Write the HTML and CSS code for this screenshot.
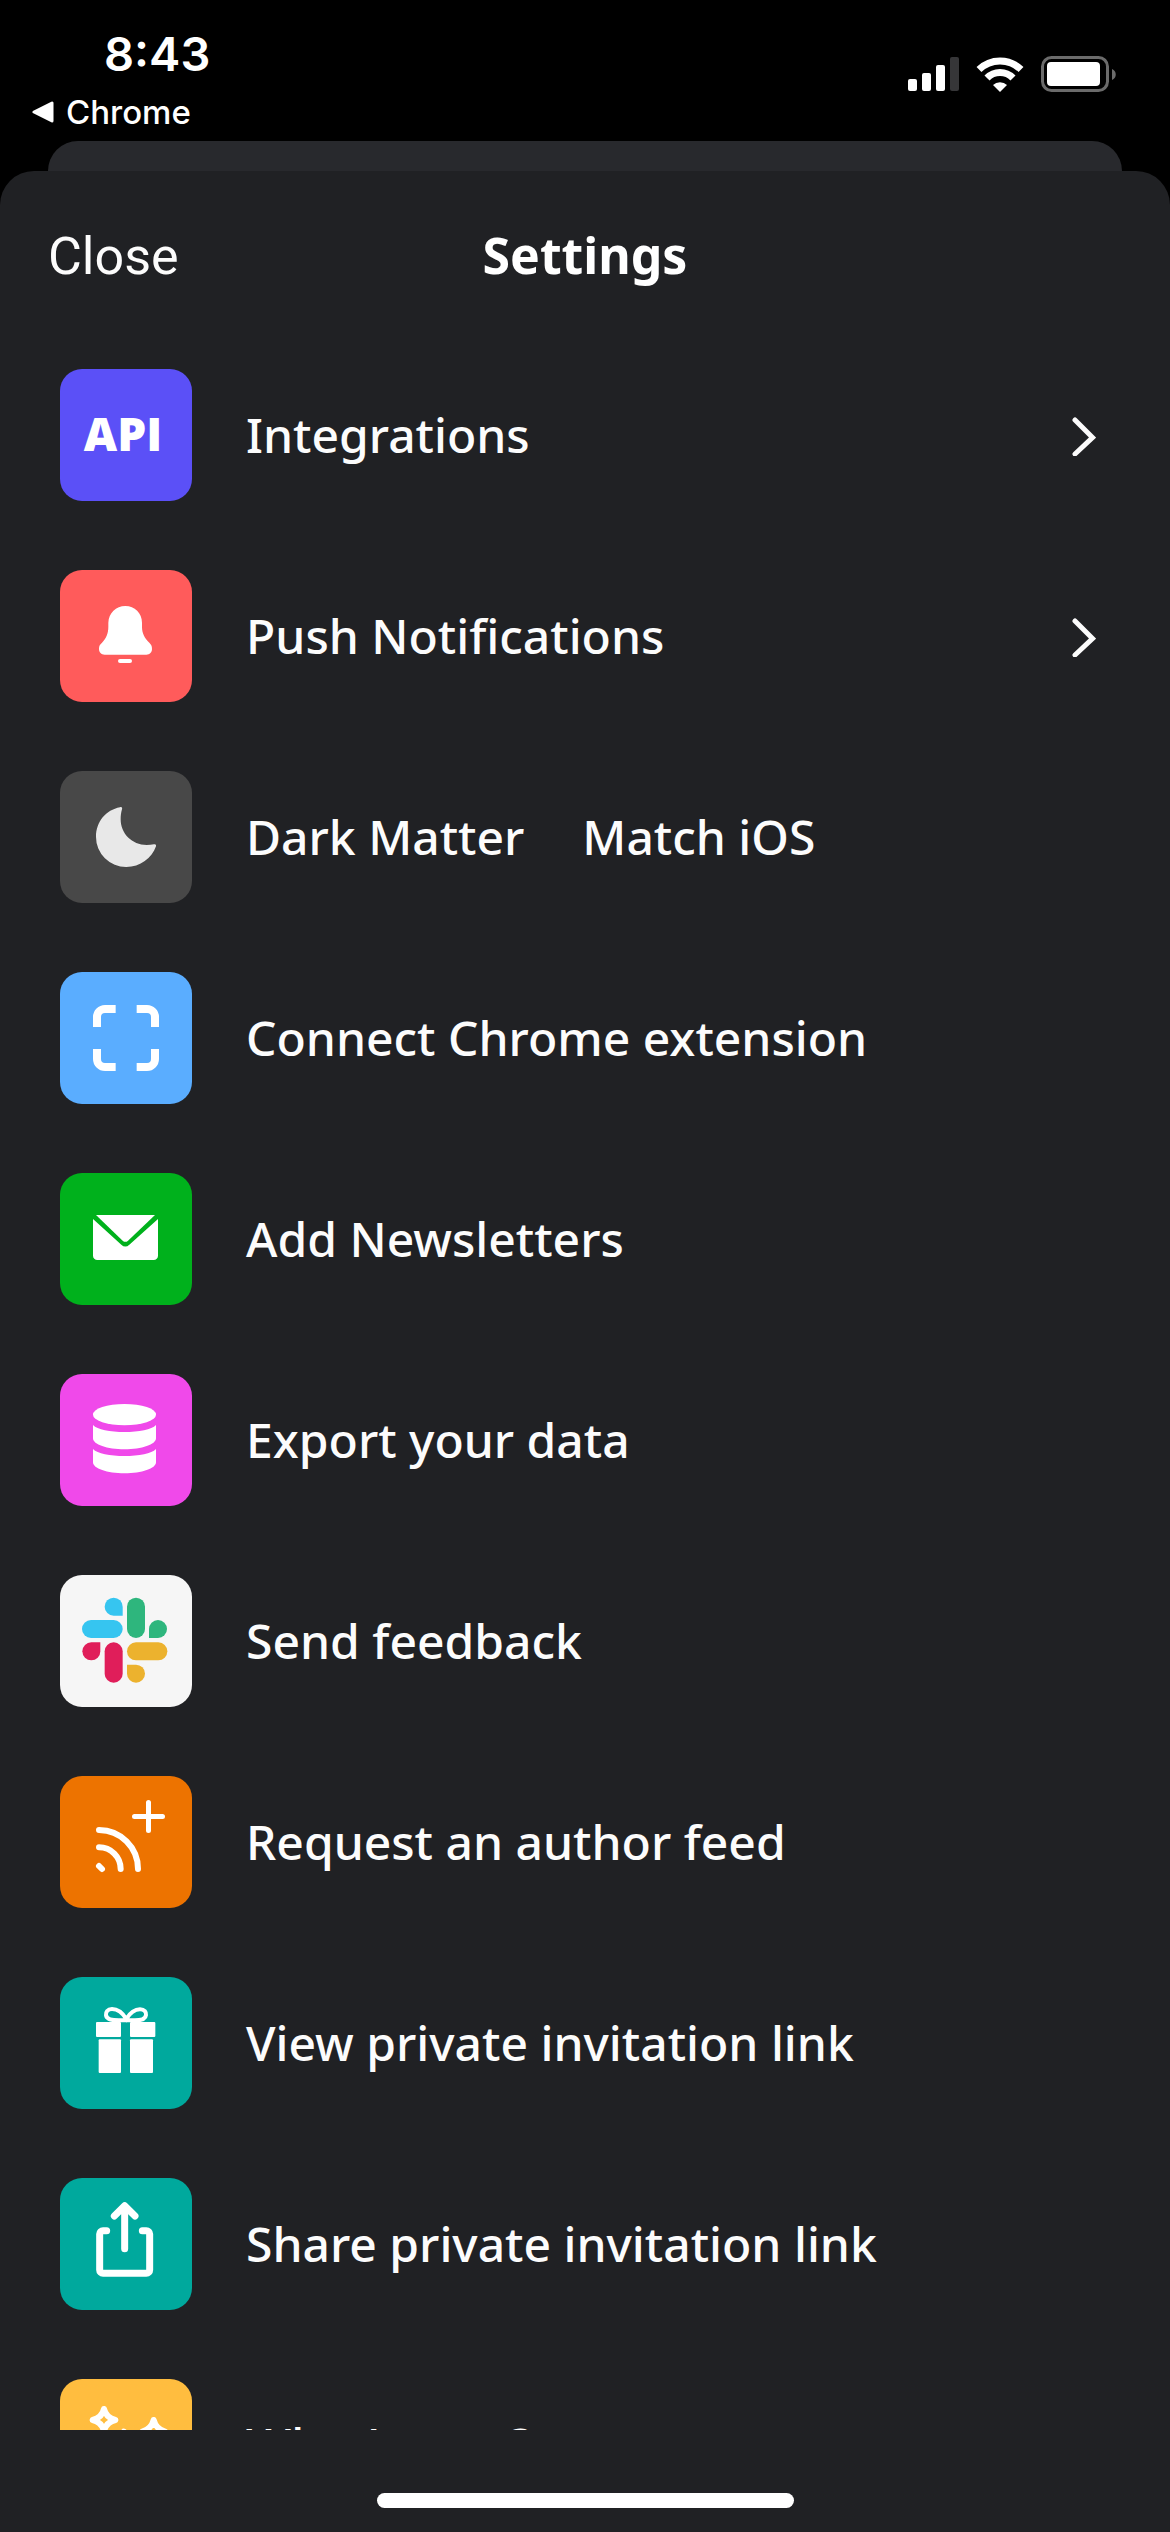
FILE: index.html
```html
<!DOCTYPE html>
<html lang="en">
<head>
<meta charset="utf-8">
<meta name="viewport" content="width=device-width, initial-scale=1">
<title>Settings</title>
<link rel="stylesheet" href="styles.css">
</head>
<body>
<header class="status">
  <div class="status-left">
    <time class="clock">8:43</time>
    <a class="back" href="#">
      <svg class="back-arrow" viewBox="0 0 22 22" aria-hidden="true"><path d="M20 2v18L2 11z" fill="#fff" stroke="#fff" stroke-width="3" stroke-linejoin="round"/></svg>
      Chrome
    </a>
  </div>
  <div class="status-right">
    <svg class="signal" viewBox="0 0 51 36" aria-hidden="true"><g fill="#fff"><rect x="0" y="23" width="9" height="12" rx="2"/><rect x="14" y="17" width="9" height="18" rx="2"/><rect x="28" y="9" width="9" height="26" rx="2"/><rect x="42" y="1" width="9" height="34" rx="2" fill="#363638"/></g></svg>
    <svg class="wifi" viewBox="0 0 48 36" aria-hidden="true"><g fill="none" stroke="#fff" stroke-width="7"><path d="M3 13.500A30 30 0 0 1 45 13.500"/><path d="M11 22a18 18 0 0 1 26 0"/></g><path d="M17 29a10 10 0 0 1 14 0l-7 7z" fill="#fff"/></svg>
    <svg class="battery" viewBox="0 0 76 36" aria-hidden="true"><rect x="1.500" y="1.500" width="65" height="33" rx="9" fill="none" stroke="#6b6b6b" stroke-width="3"/><rect x="6" y="6" width="53" height="24" rx="4" fill="#fff"/><path d="M71 13c5 2 5 9 0 11z" fill="#6b6b6b"/></svg>
  </div>
</header>
<div class="card-behind"></div>
<main class="sheet">
  <div class="sheet-head">
    <button class="close" type="button">Close</button>
    <h1 class="title">Settings</h1>
  </div>
  <ul class="list">
    <li><button class="row" type="button">
      <span class="tile tile-api">API</span>
      <span class="label">Integrations</span>
      <svg class="chevron" viewBox="0 0 24 42" aria-hidden="true"><path d="M3 6l17.500 17.500L3 40"/></svg>
    </button></li>
    <li><button class="row" type="button">
      <svg class="tile tile-bell" viewBox="0 0 396 396" aria-hidden="true"><g fill="#fff"><path d="M196 108C224 108 246 130 246 158V170C246 190 254 204 268 218C274 224 276 228 276 237C276 247 269 254 259 254H134C124 254 117 247 117 237C117 228 119 224 126 218C139 204 145 190 145 170V158C146 130 168 108 196 108z"/><rect x="174" y="267" width="42" height="12" rx="6"/></g></svg>
      <span class="label">Push Notifications</span>
      <svg class="chevron" viewBox="0 0 24 42" aria-hidden="true"><path d="M3 6l17.500 17.500L3 40"/></svg>
    </button></li>
    <li><button class="row" type="button">
      <svg class="tile tile-moon" viewBox="0 0 396 396" aria-hidden="true"><path fill="#e8e8e8" d="M180 109C184 107 188 110 186 115C183 125 182 135 182 145C182 188 216 222 260 222C268 222 275 221 282 220C287 219 289 222 288 226C276 262 240 288 199 288A90 90 0 0 1 108 198C108 152 138 117 180 109z"/></svg>
      <span class="label">Dark Matter</span>
      <span class="value">Match iOS</span>
    </button></li>
    <li><button class="row" type="button">
      <svg class="tile tile-scan" viewBox="0 0 396 396" aria-hidden="true"><path fill="none" stroke="#fff" stroke-width="24" d="M111 165V135a24 24 0 0 1 24-24h32M230 111h31a24 24 0 0 1 24 24v30M285 231v30a24 24 0 0 1-24 24h-31M167 285h-32a24 24 0 0 1-24-24v-30"/></svg>
      <span class="label">Connect Chrome extension</span>
    </button></li>
    <li><button class="row" type="button">
      <svg class="tile tile-mail" viewBox="0 0 396 396" aria-hidden="true"><g fill="#fff"><path d="M108 126H285L204 203Q196 210 188 203z"/><path d="M99 138L184 215Q196 226 208 215L294 138V248a13 13 0 0 1-13 13H112a13 13 0 0 1-13-13z"/></g></svg>
      <span class="label">Add Newsletters</span>
    </button></li>
    <li><button class="row" type="button">
      <svg class="tile tile-data" viewBox="0 0 396 396" aria-hidden="true"><g fill="#fff"><ellipse cx="193.500" cy="122" rx="94.500" ry="32"/><path d="M99 153C112 167 150 174 193.500 174S275 167 288 153V193C288 212 245 226 193.500 226S99 212 99 193z"/><path d="M99 225C112 239 150 246 193.500 246S275 239 288 225V265C288 284 245 298 193.500 298S99 284 99 265z"/></g></svg>
      <span class="label">Export your data</span>
    </button></li>
    <li><button class="row" type="button">
      <svg class="tile tile-slack" viewBox="0 0 396 396" aria-hidden="true"><g fill="#36c5f0"><path d="M161 68a27 27 0 0 1 27 27v27h-27a27 27 0 0 1 0-54z"/><rect x="66" y="135" width="122" height="54" rx="27"/></g><g fill="#2eb67d"><rect x="201" y="68" width="54" height="121" rx="27"/><path d="M267 189v-27a27 27 0 1 1 27 27z"/></g><g fill="#ecb22e"><rect x="201" y="202" width="121" height="54" rx="27"/><path d="M201 269h27a27 27 0 1 1-27 27z"/></g><g fill="#e01e5a"><rect x="134" y="202" width="54" height="121" rx="27"/><path d="M121 202v27a27 27 0 1 1-27-27z"/></g></svg>
      <span class="label">Send feedback</span>
    </button></li>
    <li><button class="row" type="button">
      <svg class="tile tile-feed" viewBox="0 0 396 396" aria-hidden="true"><g fill="none" stroke="#fff" stroke-linecap="round"><path stroke-width="15" d="M265.500 79.500v84M223.500 121.500h84"/><path stroke-width="18" d="M117 162a117 117 0 0 1 117 117M117 214a65 65 0 0 1 65 65M117 270l9 9"/></g></svg>
      <span class="label">Request an author feed</span>
    </button></li>
    <li><button class="row" type="button">
      <svg class="tile tile-gift" viewBox="0 0 396 396" aria-hidden="true"><g fill="#fff"><rect x="108" y="135" width="75" height="45" rx="3"/><rect x="210" y="135" width="76" height="45" rx="3"/><rect x="116" y="187" width="67" height="101" rx="3"/><rect x="210" y="187" width="69" height="101" rx="3"/></g><path fill="none" stroke="#fff" stroke-width="12" d="M199 126C188 108 172 96 156 96C142 96 137 106 138 114C139 126 155 130 176 130H225C242 130 257 126 258 114C259 106 254 97 240 97C224 97 210 108 199 126z"/></svg>
      <span class="label">View private invitation link</span>
    </button></li>
    <li><button class="row" type="button">
      <svg class="tile tile-gift" viewBox="0 0 396 396" aria-hidden="true"><path fill="none" stroke="#fff" stroke-width="21" stroke-linecap="round" stroke-linejoin="round" d="M140 158H129a10 10 0 0 0-10 10V276a10 10 0 0 0 10 10H259a10 10 0 0 0 10-10V168a10 10 0 0 0-10-10H247M194 84V212M163 114L194 83L225 114"/></svg>
      <span class="label">Share private invitation link</span>
    </button></li>
    <li><button class="row" type="button">
      <svg class="tile tile-new" viewBox="0 0 396 396" aria-hidden="true"><g fill="none" stroke="#fff" stroke-width="18" stroke-linejoin="round"><path d="M132 90Q138 116 166 123Q138 130 132 157Q126 130 98 123Q126 116 132 90z"/><path d="M281 123Q288 150 315 158Q288 166 281 193Q274 166 247 158Q274 150 281 123z"/><path d="M192 158Q204 215 252 230Q204 245 192 302Q180 245 132 230Q180 215 192 158z"/></g></svg>
      <span class="label">What's new?</span>
    </button></li>
  </ul>
  <footer class="home"><div class="home-bar"></div></footer>
</main>
</body>
</html>
```

FILE: styles.css
```css
* {
  box-sizing: border-box;
}

body {
  margin: 0;
  height: 100vh;
  display: flex;
  flex-direction: column;
  background: #000;
  color: #fcfcfc;
  font-family: "Noto Sans", sans-serif;
}

.status {
  flex: none;
  height: 141px;
  display: flex;
  justify-content: space-between;
  padding: 24px 53px 0 32px;
  color: #fff;
  font-family: Inter, sans-serif;
}

.status-left {
  display: flex;
  flex-direction: column;
  align-items: flex-start;
  gap: 8px;
}

.clock {
  padding-left: 72px;
  font-size: 47px;
  font-weight: 600;
  line-height: 60px;
}

.back {
  display: flex;
  align-items: center;
  gap: 12px;
  color: inherit;
  font-size: 33px;
  font-weight: 500;
  line-height: 40px;
  text-decoration: none;
}

.back-arrow {
  width: 22px;
  height: 22px;
}

.status-right {
  display: flex;
  gap: 17px;
  padding-top: 32px;
}

.signal {
  width: 51px;
  height: 36px;
}

.wifi {
  width: 48px;
  height: 36px;
}

.battery {
  width: 76px;
  height: 36px;
}

.card-behind {
  flex: none;
  height: 30px;
  margin: 0 48px;
  border-radius: 30px 30px 0 0;
  background: #28292d;
}

.sheet {
  flex: 1;
  min-height: 0;
  display: flex;
  flex-direction: column;
  border-radius: 34px 34px 0 0;
  background: #202124;
}

.sheet-head {
  flex: none;
  height: 164px;
  display: grid;
  grid-template-columns: 1fr auto 1fr;
  align-items: baseline;
  padding: 52px 48px 0;
}

.close {
  justify-self: start;
  padding: 0;
  border: 0;
  background: none;
  color: inherit;
  font-family: Roboto, sans-serif;
  font-size: 52px;
  line-height: 64px;
}

.title {
  margin: 0;
  color: #fff;
  font-size: 50px;
  font-weight: 700;
  line-height: 64px;
}

.list {
  flex: 1;
  min-height: 0;
  margin: 0;
  padding: 0;
  overflow-y: auto;
  scrollbar-width: none;
  list-style: none;
}

.row {
  width: 100%;
  display: flex;
  align-items: center;
  padding: 34px 74px 35px 60px;
  border: 0;
  background: none;
  color: inherit;
  font-family: inherit;
  font-size: 48px;
  font-weight: 500;
  line-height: 64px;
  text-align: left;
}

.tile {
  flex: none;
  width: 132px;
  height: 132px;
  margin-right: 54px;
  border-radius: 22px;
}

.value {
  margin-left: 58px;
}

.chevron {
  width: 24px;
  height: 42px;
  margin-left: auto;
  fill: none;
  stroke: #fcfcfc;
  stroke-width: 5px;
  stroke-linecap: round;
}

.tile-api {
  display: flex;
  align-items: center;
  justify-content: center;
  padding: 0 6px 4px 0;
  background: #5b50f7;
  color: #fff;
  font-family: "Open Sans", sans-serif;
  font-size: 46px;
  font-weight: 800;
}

.tile-bell {
  background: #ff5b5b;
}

.tile-moon {
  background: #484848;
}

.tile-scan {
  background: #5aadff;
}

.tile-mail {
  background: #00b11c;
}

.tile-data {
  background: #f049ea;
}

.tile-slack {
  background: #f6f6f6;
}

.tile-feed {
  background: #ed7300;
}

.tile-gift {
  background: #00a99d;
}

.tile-new {
  background: #ffbd3f;
}

.home {
  flex: none;
  display: flex;
  justify-content: center;
  padding: 63px 0 24px;
}

.home-bar {
  width: 417px;
  height: 15px;
  border-radius: 8px;
  background: #fff;
}
```
